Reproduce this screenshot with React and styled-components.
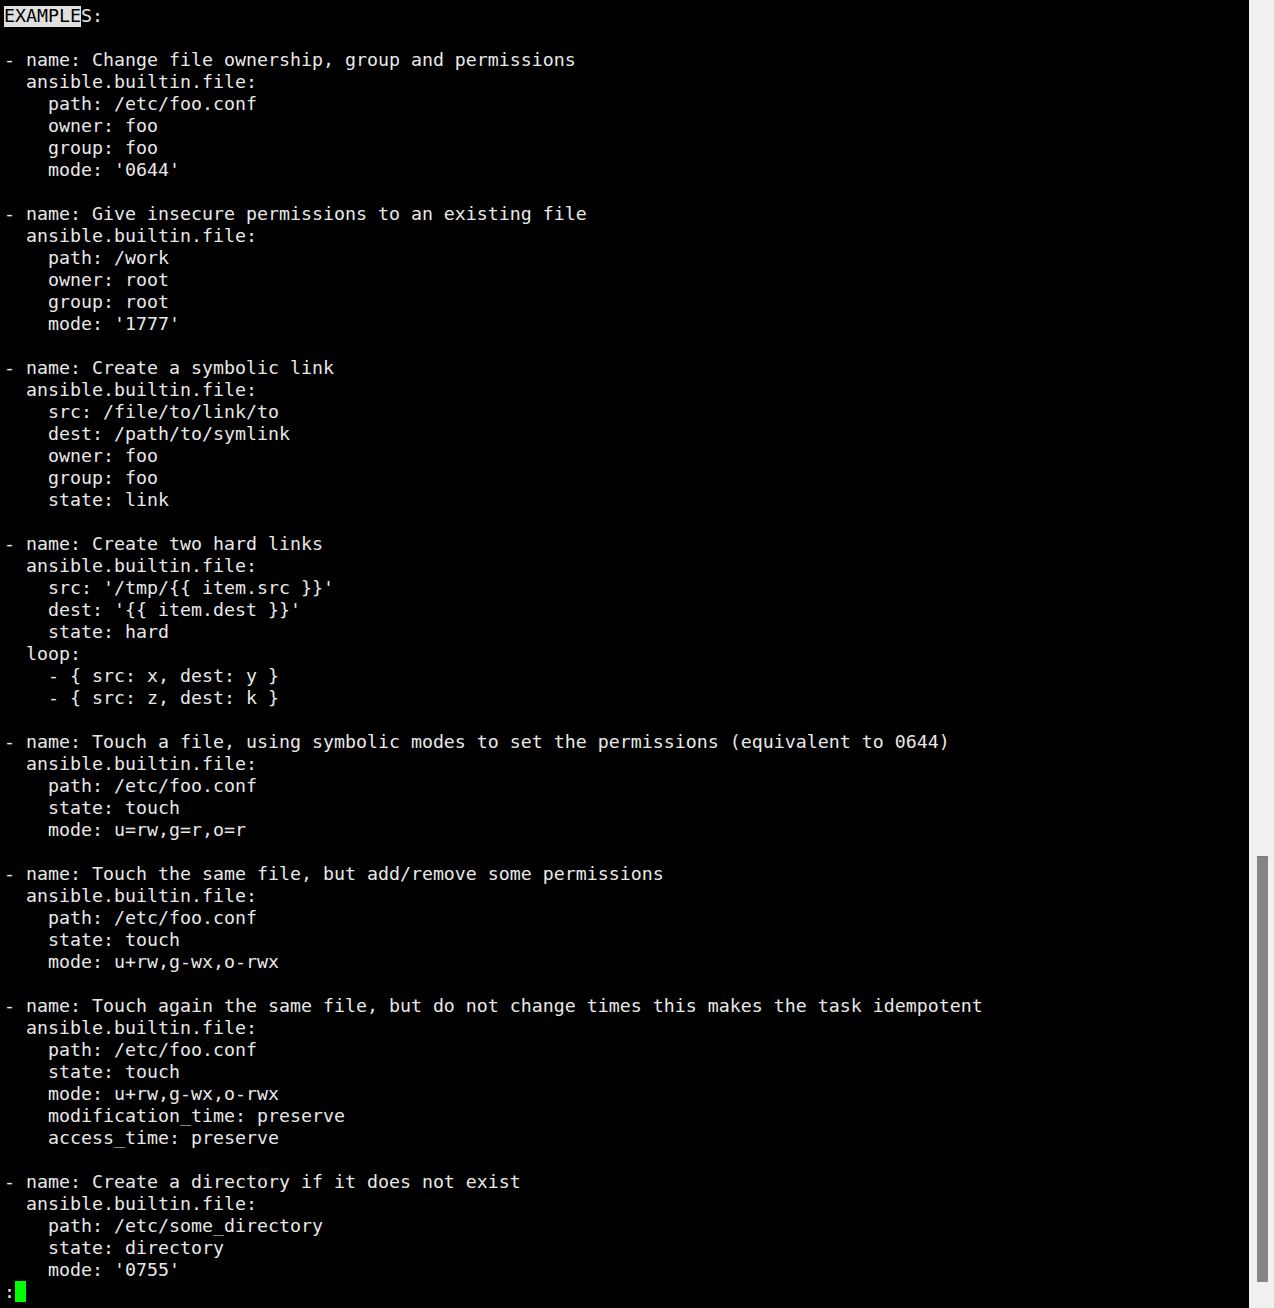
import React from "react";
import styled, { createGlobalStyle } from "styled-components";

const Global = createGlobalStyle`
  html, body { margin: 0; padding: 0; background: #000; }
  body { width: 1274px; height: 1308px; overflow: hidden; }
`;

const Window = styled.div`
  display: flex;
  width: 1274px;
  height: 1308px;
  background: #000;
`;

const Terminal = styled.pre`
  flex: 1;
  margin: 0;
  padding: 5px 0 0 4px;
  font-family: "DejaVu Sans Mono", "Liberation Mono", monospace;
  font-size: 18.27px;
  line-height: 22px;
  color: #e8e8e8;
  white-space: pre;
  overflow: hidden;
`;

const Line = styled.div`
  height: 22px;
`;

const Highlight = styled.span`
  display: inline-block;
  height: 21px;
  margin-top: 1px;
  vertical-align: top;
  line-height: 20px;
  background: #e0e0e0;
  color: #000;
`;

const Cursor = styled.span`
  display: inline-block;
  width: 11px;
  height: 21px;
  vertical-align: top;
  background: #00ff00;
`;

const ScrollTrack = styled.div`
  width: 25px;
  flex: none;
  background: #f0f0f0;
  display: flex;
  flex-direction: column;
  align-items: center;
  padding-top: 856px;
  box-sizing: border-box;
`;

const Thumb = styled.div`
  width: 11px;
  height: 426px;
  margin-left: 1px;
  background: #858585;
  border-top: 1px solid #7a7a7a;
  box-sizing: border-box;
`;

const lines = [
  "",
  "- name: Change file ownership, group and permissions",
  "  ansible.builtin.file:",
  "    path: /etc/foo.conf",
  "    owner: foo",
  "    group: foo",
  "    mode: '0644'",
  "",
  "- name: Give insecure permissions to an existing file",
  "  ansible.builtin.file:",
  "    path: /work",
  "    owner: root",
  "    group: root",
  "    mode: '1777'",
  "",
  "- name: Create a symbolic link",
  "  ansible.builtin.file:",
  "    src: /file/to/link/to",
  "    dest: /path/to/symlink",
  "    owner: foo",
  "    group: foo",
  "    state: link",
  "",
  "- name: Create two hard links",
  "  ansible.builtin.file:",
  "    src: '/tmp/{{ item.src }}'",
  "    dest: '{{ item.dest }}'",
  "    state: hard",
  "  loop:",
  "    - { src: x, dest: y }",
  "    - { src: z, dest: k }",
  "",
  "- name: Touch a file, using symbolic modes to set the permissions (equivalent to 0644)",
  "  ansible.builtin.file:",
  "    path: /etc/foo.conf",
  "    state: touch",
  "    mode: u=rw,g=r,o=r",
  "",
  "- name: Touch the same file, but add/remove some permissions",
  "  ansible.builtin.file:",
  "    path: /etc/foo.conf",
  "    state: touch",
  "    mode: u+rw,g-wx,o-rwx",
  "",
  "- name: Touch again the same file, but do not change times this makes the task idempotent",
  "  ansible.builtin.file:",
  "    path: /etc/foo.conf",
  "    state: touch",
  "    mode: u+rw,g-wx,o-rwx",
  "    modification_time: preserve",
  "    access_time: preserve",
  "",
  "- name: Create a directory if it does not exist",
  "  ansible.builtin.file:",
  "    path: /etc/some_directory",
  "    state: directory",
  "    mode: '0755'",
];

export default function App() {
  return (
    <>
      <Global />
      <Window>
        <Terminal>
          <Line>
            <Highlight>EXAMPLE</Highlight>S:
          </Line>
          {lines.map((l, i) => (
            <Line key={i}>{l}</Line>
          ))}
          <Line>
            :<Cursor />
          </Line>
        </Terminal>
        <ScrollTrack>
          <Thumb />
        </ScrollTrack>
      </Window>
    </>
  );
}
